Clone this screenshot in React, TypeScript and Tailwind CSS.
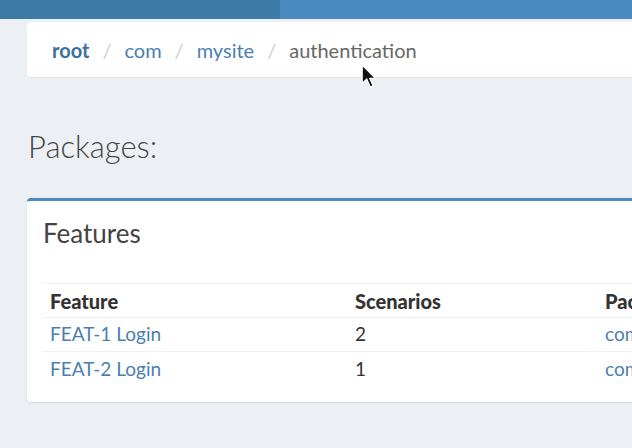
import React from 'react';

const features = [
  { name: 'FEAT-1 Login', scenarios: 2, pkg: 'com.mysite.authentication' },
  { name: 'FEAT-2 Login', scenarios: 1, pkg: 'com.mysite.authentication' },
];

const Cursor = () => (
  <svg width="15" height="24" viewBox="0 0 13 21" className="absolute left-[361px] top-[64px]">
    <path d="M1 1 L1 17 L5 13 L8 20 L10.5 19 L7.5 12.5 L12.5 12.5 Z" fill="#111" stroke="#fff" strokeWidth="1" strokeLinejoin="round" />
  </svg>
);

export default function App() {
  return (
    <div className="relative w-[632px] h-[448px] overflow-hidden bg-[#ecf0f5]" style={{ fontFamily: 'Lato, "Open Sans", sans-serif' }}>
      {/* top navbar */}
      <div className="flex h-[19px]">
        <div className="w-[280px] bg-[#3e7aa6]" />
        <div className="flex-1 bg-[#4a8bbf]" />
      </div>

      <div className="w-[760px] pl-[27px] pt-[3px]">
        {/* breadcrumb */}
        <div className="h-[55px] bg-white rounded-[4px] flex items-center pl-[25px] text-[20px] shadow-[0_1px_1px_rgba(0,0,0,0.05)]">
          <span className="font-bold text-[#3c6fa0]">root</span>
          <span className="text-[#ccc] px-[13px]">/</span>
          <span className="text-[#4a7fb0]">com</span>
          <span className="text-[#ccc] px-[13px]">/</span>
          <span className="text-[#4a7fb0]">mysite</span>
          <span className="text-[#ccc] px-[13px]">/</span>
          <span className="text-[#666]">authentication</span>
        </div>

        <h1 className="mt-[49px] ml-[1px] text-[31px] font-light text-[#444] leading-[40px]">Packages:</h1>

        {/* features box */}
        <div className="mt-[32px] bg-white rounded-[4px] border-t-[3px] border-[#4a8bbf] shadow-[0_1px_2px_rgba(0,0,0,0.1)] pb-[16px]">
          <div className="h-[65px] flex items-center pl-[16px] text-[26px] text-[#444]">Features</div>
          <div className="px-[15px] pt-[17px]">
            <table className="w-[700px] table-fixed text-[19px] text-[#333] border-collapse">
              <thead>
                <tr className="border-t border-b border-[#f0f0f0] h-[34px]">
                  <th className="w-[305px] text-left font-black text-[20px] pl-[8px]">Feature</th>
                  <th className="w-[250px] text-left font-black text-[20px] pl-[8px]">Scenarios</th>
                  <th className="text-left font-black text-[20px] pl-[8px]">Package</th>
                </tr>
              </thead>
              <tbody>
                {features.map((f, i) => (
                  <tr key={f.name} className={`h-[34px] ${i === 0 ? 'border-b border-[#f0f0f0]' : ''}`}>
                    <td className="pl-[8px] text-[#4a7fb0]">{f.name}</td>
                    <td className="pl-[8px]">{f.scenarios}</td>
                    <td className="pl-[8px] text-[#4a7fb0] whitespace-nowrap">{f.pkg}</td>
                  </tr>
                ))}
              </tbody>
            </table>
          </div>
        </div>
      </div>

      <Cursor />
    </div>
  );
}
